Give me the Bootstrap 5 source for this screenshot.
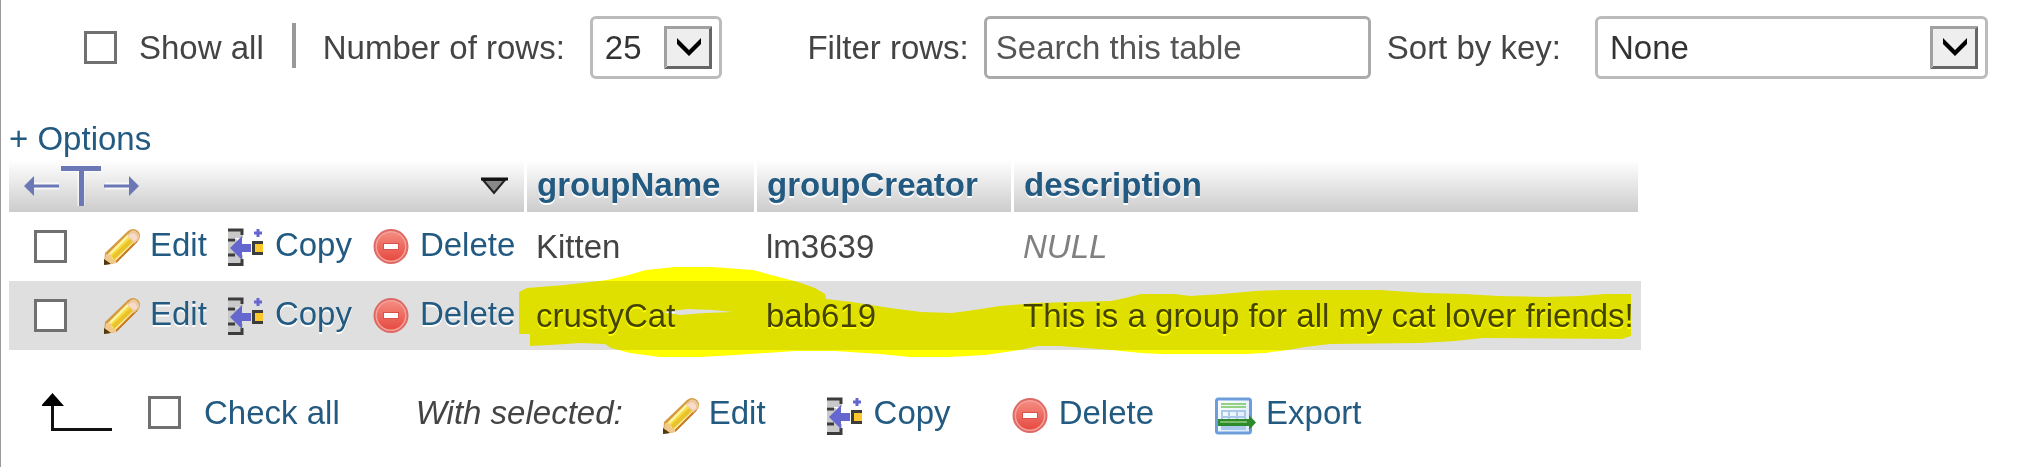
<!DOCTYPE html>
<html lang="en">
<head>
<meta charset="utf-8">
<meta name="viewport" content="width=device-width, initial-scale=1">
<title>Browse table</title>
<link href="https://cdn.jsdelivr.net/npm/bootstrap@5.3.0/dist/css/bootstrap.min.css" rel="stylesheet">
<style>
body{font:33px/42px "Liberation Sans",Arial,sans-serif;color:#444;background:#fff;border-left:1px solid #999;min-height:100vh}
a,.act{color:#235a81;text-decoration:none}
a:hover,.act:hover{text-decoration:underline}
.toolbar{padding:16px 29px 39px 83px}
.tick{appearance:none;width:33px;height:33px;border:3px solid #707070;background:#fff;margin:0;flex:none}
.tick:checked{background:#235a81;box-shadow:inset 0 0 0 4px #fff}
.show-all{margin-left:22px}
.rule{width:4px;height:45px;background:#999;margin:0 27px 4px 28px}
.field{height:63px;border:3px solid #bbb;border-radius:6px;background-color:#fff;color:#333;padding:0 9px;line-height:42px}
.search{width:387px;border-color:#aaa;margin:0 16px 0 15px}
.search::placeholder{color:#555;opacity:1}
.pick{appearance:none;padding-left:12px;background:#fff url("data:image/svg+xml,%3Csvg xmlns='http://www.w3.org/2000/svg' width='48' height='43'%3E%3Cpath fill='%23666' d='M0 43h48V0z'/%3E%3Cpath fill='%23a0a0a0' d='M0 0h48l-3 3L3 40l-3 3z'/%3E%3Cpath fill='%23eee' d='M3 3h42v37H3z'/%3E%3Cpath fill='%23000' d='M13 12l12 12 12-12v6L25 30 13 18z'/%3E%3C/svg%3E") no-repeat right 7px center}
.rows-pick{width:132px;margin-left:25px}
.sort-pick{width:393px;margin-left:34px}
.results{margin-left:8px}
.grid-data{border-collapse:separate;border-spacing:0}
.grid-data th{height:52px;padding:0 9px 3px 10px;background:linear-gradient(#fff,#ccc);border-right:3px solid #fff;color:#235a81;text-shadow:0 2px 0 #fff;font-weight:700}
.grid-data td{height:69px;padding:0 7px 0 9px;text-shadow:0 2px 0 #fff;white-space:nowrap}
.grid-data tr.odd td{background:#dfdfdf}
.grid-data td.tools{padding:0 7px 0 25px}
.w-tools{width:518px}.w-name{width:230px}.w-creator{width:257px}
.null{color:#808080;font-style:italic}
.act{display:inline-flex;align-items:center;gap:9px;border:0;background:none;padding:0;white-space:nowrap}
.act svg{width:38px;height:38px;flex:none}
.tools .act span{padding-bottom:4px}
.tools .d-flex{gap:21px}
.tools .tick{margin-right:15px}
.marker{position:absolute;left:510px;top:106px;width:1113px;height:92px;mix-blend-mode:multiply;pointer-events:none}
.bulk{padding:41px 0 30px 41px}
.bulk .tick{margin:0 23px 2px 36px}
.bulk em{margin:0 39px 0 76px}
.bulk .bulk-acts{gap:61px}
.bulk .act svg{margin-top:6px}
.check-all{color:#235a81}
.act .wide-icon{width:42px}
</style>
</head>
<body>
<svg class="position-absolute" width="0" height="0" aria-hidden="true">
<defs>
<linearGradient id="g-red" x2="0" y2="1"><stop stop-color="#f58a80"/><stop offset="1" stop-color="#e64b41"/></linearGradient>
<linearGradient id="g-sheet" x2="1" y2="1"><stop stop-color="#fff"/><stop offset="1" stop-color="#d8e8f8"/></linearGradient>
</defs>
<symbol id="i-edit" viewBox="0 0 38 38">
<path d="M2 25L25 3q5-4 10 0 4 5 0 10L13 35 1 37z" fill="#d39a40"/>
<path d="M4 27L25 6l8 8-20 20z" fill="#ffe9a0"/>
<path d="M6 26L24 8l6 6-19 18z" fill="#f5dd45"/>
<path d="M9 28L27 11l3 3-19 18z" fill="#eac32c"/>
<path d="M7 26L25 8" stroke="#fff5a8" stroke-width="2"/>
<path d="M13 34L34 13" stroke="#c67b22" stroke-width="2"/>
<path d="M24 7l4-4q4-2 7 2 3 4 0 7l-4 4z" fill="#edc99e"/>
<path d="M28 6q3-2 5 1t0 5l-2 1-6-5z" fill="#f8dccb"/>
<path d="M3 26l5 1 1 4 4 1v3L1 37z" fill="#f1c98b"/>
<path d="M1 31l7 5-7 1z" fill="#50380f"/>
</symbol>
<symbol id="i-copy" viewBox="0 0 38 38">
<path d="M0 1h15v9H0zM0 11h9v16H0zM0 27h15v11H0z" fill="#c9c9c9"/>
<path d="M0 2h14v5M0 12h7M0 27h7M0 36.500h14V31" fill="none" stroke="#3c3c3c" stroke-width="3"/>
<path d="M2 20L14 8v8h9v8h-9v8z" fill="#6666cf"/>
<path d="M30 1v8M26 5h8" stroke="#6666cf" stroke-width="3"/>
<path d="M24 13h11v14H24z" fill="#3c3c3c"/><path d="M27 16h8v8h-8z" fill="#ffc72e"/>
</symbol>
<symbol id="i-delete" viewBox="0 0 38 38">
<circle cx="18" cy="18.500" r="17.500" fill="#dd6a65"/><circle cx="18" cy="18.500" r="15.500" fill="#f4a19a"/>
<circle cx="18" cy="18.500" r="14" fill="url(#g-red)"/><path d="M10 15h16v7H10z" fill="#d95149"/><path d="M11 16h14v5H11z" fill="#fff"/>
</symbol>
<symbol id="i-export" viewBox="0 0 42 38">
<rect x="1.500" y="2" width="34" height="34" rx="2" fill="url(#g-sheet)" stroke="#6d9ddb" stroke-width="3"/>
<path d="M6 7h25M6 10h25" stroke="#93d184" stroke-width="2"/>
<path d="M7 14h23v18H7zM14 14v18M22 14v18M7 20h23M7 30h23" fill="none" stroke="#a9c8ec" stroke-width="2"/>
<path d="M3 22h31v-4l7 7.500-7 7.500v-4H3z" fill="#2e8b2b"/><path d="M5 25h27" stroke="#79bd69" stroke-width="2"/>
</symbol>
</svg>

<form class="toolbar d-flex align-items-center text-nowrap">
  <input class="tick" type="checkbox" id="showAll"><label class="show-all" for="showAll">Show all</label>
  <div class="rule"></div>
  <label for="rowCount">Number of rows:</label>
  <select class="field pick rows-pick" id="rowCount"><option>25</option><option>50</option><option>100</option></select>
  <label class="ms-auto" for="filter">Filter rows:</label>
  <input class="field search" id="filter" type="text" placeholder="Search this table">
  <label for="sortKey">Sort by key:</label>
  <select class="field pick sort-pick" id="sortKey"><option>None</option><option>PRIMARY (ASC)</option></select>
</form>

<main class="results">
  <a href="#options">+ Options</a>
  <div class="position-relative">
    <table class="grid-data">
      <thead><tr>
        <th class="w-tools"><div class="d-flex align-items-center justify-content-between ps-1">
          <svg width="120" height="44" viewBox="0 0 120 44" role="img" aria-label="Full texts">
            <g fill="none" stroke="#fff" stroke-width="7" opacity=".7"><path d="M10 23h26M82 23h26M38 5.500h40M58 6v37"/></g>
            <g fill="#6b78b5"><path d="M38 3h40v5H61v35h-5V8H38zM1 23l10-10v20zM116 23l-10-10v20z"/><path d="M10 21.500h26v3H10zM81 21.500h26v3H81z"/></g>
          </svg>
          <svg class="me-1" width="30" height="20" viewBox="0 0 30 20" role="img" aria-label="Sort"><path d="M2 5h22L13 18z" fill="#888" stroke="#222" stroke-width="2"/><path d="M0 4h27" stroke="#111" stroke-width="3"/></svg>
        </div></th>
        <th class="w-name"><a href="#groupName">groupName</a></th>
        <th class="w-creator"><a href="#groupCreator">groupCreator</a></th>
        <th><a href="#description">description</a></th>
      </tr></thead>
      <tbody>
        <tr>
          <td class="tools"><div class="d-flex align-items-center">
            <input class="tick" type="checkbox" aria-label="Select row Kitten">
            <a class="act" href="#edit1"><svg><use href="#i-edit"/></svg><span>Edit</span></a>
            <a class="act" href="#copy1"><svg><use href="#i-copy"/></svg><span>Copy</span></a>
            <a class="act" href="#delete1"><svg><use href="#i-delete"/></svg><span>Delete</span></a>
          </div></td>
          <td>Kitten</td><td>lm3639</td><td class="null">NULL</td>
        </tr>
        <tr class="odd">
          <td class="tools"><div class="d-flex align-items-center">
            <input class="tick" type="checkbox" aria-label="Select row crustyCat">
            <a class="act" href="#edit2"><svg><use href="#i-edit"/></svg><span>Edit</span></a>
            <a class="act" href="#copy2"><svg><use href="#i-copy"/></svg><span>Copy</span></a>
            <a class="act" href="#delete2"><svg><use href="#i-delete"/></svg><span>Delete</span></a>
          </div></td>
          <td>crustyCat</td><td>bab619</td><td>This is a group for all my cat lover friends!</td>
        </tr>
      </tbody>
    </table>
    <!-- highlighter stroke over the second row -->
    <svg class="marker" viewBox="519 266 1113 92" aria-hidden="true"><path fill="#ff0" fill-rule="evenodd" d="M519 292L527 288 565 285 607 280 625 276 646 270 675 267 712 267 753 270 771 275 798 282 815 288 825 294 826 299 852 302 890 308 921 312 952 313 974 310 1000 306 1035 303 1111 301 1125 298 1141 294 1175 294 1190 296 1222 294 1255 291 1280 290 1380 290 1425 293 1464 294 1498 296 1545 297 1580 296 1605 294 1631 294 1631 336 1622 339 1483 338 1455 341 1420 343 1330 344 1305 347 1288 350 1265 353 1245 354 1160 354 1141 353 1111 350 1060 346 1038 346 1020 350 985 355 950 357 910 357 880 354 835 351 795 351 735 355 700 357 660 357 630 353 611 348 605 344 580 343 550 345 530 346 530 334 519 334zM662 312L688 309 713 310 733 312 705 313 680 315z"/></svg>
  </div>
</main>

<form class="bulk d-flex align-items-center text-nowrap">
  <svg width="70" height="42" viewBox="0 0 70 42" aria-hidden="true"><path d="M10.500 10v27.500H70" fill="none" stroke="#111" stroke-width="3"/><path d="M10.500 1L22 14H-1z" fill="#000"/></svg>
  <input class="tick" type="checkbox" id="checkAll"><label class="check-all" for="checkAll">Check all</label>
  <em>With selected:</em>
  <div class="bulk-acts d-flex">
    <button class="act" type="button"><svg><use href="#i-edit"/></svg>Edit</button>
    <button class="act" type="button"><svg><use href="#i-copy"/></svg>Copy</button>
    <button class="act" type="button"><svg><use href="#i-delete"/></svg>Delete</button>
    <button class="act" type="button"><svg class="wide-icon"><use href="#i-export"/></svg>Export</button>
  </div>
</form>
<script src="https://cdn.jsdelivr.net/npm/bootstrap@5.3.0/dist/js/bootstrap.bundle.min.js"></script>
</body>
</html>
